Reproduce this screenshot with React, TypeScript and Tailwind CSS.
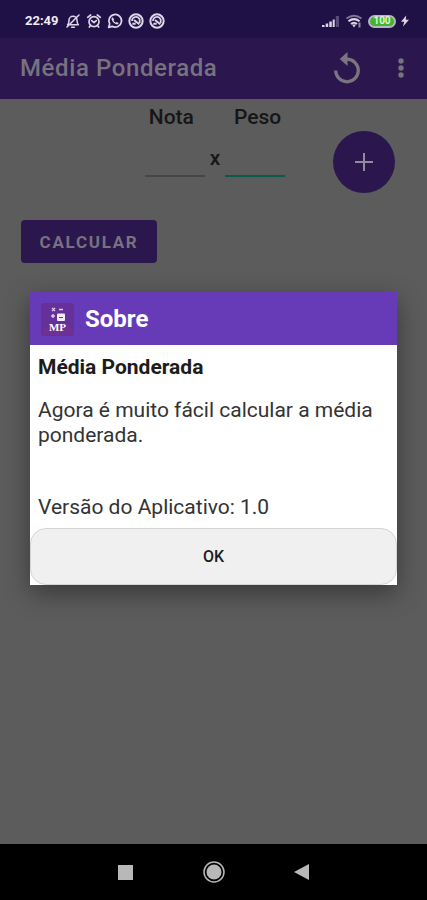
import { useState } from "react";
import clsx from "clsx";

function MutedBellIcon() {
  return (
    <svg viewBox="0 0 24 24" className="size-4" fill="none" stroke="currentColor" strokeWidth="2.3" strokeLinecap="round" strokeLinejoin="round" aria-hidden="true">
      <path d="M4 17.5h16c-2-1.500-2-3-2-6.500a6 6 0 0 0-12 0c0 3.500 0 5-2 6.500ZM10 21.500h4M21 3 3 21" />
    </svg>
  );
}

function AlarmIcon() {
  return (
    <svg viewBox="0 0 24 24" className="size-4" fill="none" stroke="currentColor" strokeWidth="2.5" strokeLinecap="round" strokeLinejoin="round" aria-hidden="true">
      <circle cx="12" cy="13" r="7.500" />
      <path d="M2.500 6.500 7 3M21.500 6.500 17 3M8.500 11.500l3.500 3 3.500-3M6.500 19 5 21M17.500 19l1.500 2" />
    </svg>
  );
}

function WhatsAppIcon() {
  return (
    <svg viewBox="0 0 24 24" className="size-4" fill="none" stroke="currentColor" strokeWidth="2.6" strokeLinejoin="round" aria-hidden="true">
      <path d="M2.500 21.500 4 16.300A9.500 9.500 0 1 1 7.700 20Z" />
      <path fill="currentColor" stroke="none" d="M8.400 6.500c-1.400.7-1.800 2.200-1.300 3.800 1 3.200 3.600 5.800 6.800 6.700 1.600.4 3.200-.3 3.600-1.900l-2.900-1.700-1.400 1.300c-1.500-.7-2.700-1.900-3.400-3.400l1-1.400Z" />
    </svg>
  );
}

function AppNoticeIcon() {
  return (
    <svg viewBox="0 0 24 24" className="size-4" fill="none" stroke="currentColor" aria-hidden="true">
      <circle cx="12" cy="12" r="10" strokeWidth="3" />
      <path d="M6 12a6 6 0 0 1 11.500-2.500V15" strokeWidth="2.6" />
      <path d="M9 10.500 17 17M6.500 16h5" strokeWidth="3" />
    </svg>
  );
}

function SignalIcon() {
  return (
    <svg viewBox="0 0 18 14" className="h-3.5 w-[18px]" fill="currentColor" aria-hidden="true">
      <path d="M0 11h2.500v2H0zM3.700 9.500h2.500V13H3.700zM7.300 7.500h2.500V13H7.300zM10.700 5.500h2V13h-2z" />
      <path opacity=".3" d="M13.800 2h3.200v11h-3.200z" />
    </svg>
  );
}

function WifiIcon() {
  return (
    <svg viewBox="0 0 18 14" className="h-3.5 w-[18px]" fill="none" stroke="currentColor" strokeWidth="2" aria-hidden="true">
      <path opacity=".5" d="M1.500 4.500q7.500-5.500 15 0" />
      <path d="M3.500 7.300q5.500-4.300 11 0M6 10q3-2.500 6 0" />
      <path d="m7 10.500 2 3 2-3Z" fill="currentColor" stroke="none" />
      <path opacity=".6" d="M14.500 8.500v5" />
    </svg>
  );
}

function StatusBar() {
  return (
    <div className="flex h-[38px] items-center justify-between bg-[#1f1145] pt-1 pr-[18px] pl-[25px] text-[#dcd8e8]">
      <div className="flex items-center gap-[5px]">
        <span className="mr-px text-[13px] font-bold text-[#eeebf5]">22:49</span>
        <MutedBellIcon />
        <AlarmIcon />
        <WhatsAppIcon />
        <AppNoticeIcon />
        <AppNoticeIcon />
      </div>
      <div className="flex items-center gap-[5px]">
        <SignalIcon />
        <WifiIcon />
        <span className="flex h-[13px] w-7 items-center justify-center rounded-full border-2 border-[#b9b3c8] bg-[#43b52b] text-[10px] leading-none font-bold text-[#dcf7d5]">
          100
        </span>
        <svg viewBox="0 0 10 14" className="h-3 w-2" fill="currentColor" aria-hidden="true">
          <path d="M6.500 0 0 8h4L2.500 14 10 5.500H6Z" />
        </svg>
      </div>
    </div>
  );
}

function AppBar() {
  return (
    <header className="flex h-[61px] items-center bg-[#2b174d] pr-4 pb-0.5 pl-5 text-[#777280]">
      <h1 className="flex-1 text-2xl font-medium tracking-wide">Média Ponderada</h1>
      <button type="button" aria-label="Reiniciar" className="flex size-10 items-center justify-center">
        <svg viewBox="0 0 26 32" className="h-8 w-[26px] text-[#7b7581]" aria-hidden="true">
          <path d="M1.700 18.500A11.300 11.300 0 1 0 13 7.200" fill="none" stroke="currentColor" strokeWidth="3.2" />
          <path d="M13.500 0v14L5.700 7Z" fill="currentColor" />
        </svg>
      </button>
      <button type="button" aria-label="Mais opções" className="ml-6 flex h-10 w-5 items-center justify-center">
        <svg viewBox="0 0 6 20" className="h-5 w-1.5" fill="currentColor" aria-hidden="true">
          <circle cx="3" cy="3" r="2.700" />
          <circle cx="3" cy="10" r="2.700" />
          <circle cx="3" cy="17" r="2.700" />
        </svg>
      </button>
    </header>
  );
}

function GradeInput({ id, active = false }: { id: string; active?: boolean }) {
  return (
    <input
      id={id}
      inputMode="decimal"
      className={clsx("h-[46px] w-[60px] border-b-2 bg-transparent text-center outline-none", active ? "border-[#0b5a4f]" : "border-[#464646]")}
    />
  );
}

function GradeForm() {
  return (
    <main className="flex-1 px-5 pt-1 text-[21px] leading-7 text-[#161616]">
      <div className="flex items-start justify-end">
        <div className="flex flex-col items-center font-medium">
          <div className="flex gap-10">
            <label htmlFor="nota">Nota</label>
            <label htmlFor="peso">Peso</label>
          </div>
          <div className="flex items-center">
            <GradeInput id="nota" />
            <span className="w-5 pt-2 text-center">x</span>
            <GradeInput id="peso" active />
          </div>
        </div>
        <button type="button" aria-label="Adicionar nota" className="mt-7 mr-3 ml-12 flex size-[62px] items-center justify-center rounded-full bg-[#2b174d] text-[#928b9c]">
          <svg viewBox="0 0 18 18" className="size-[18px]" stroke="currentColor" strokeWidth="2" aria-hidden="true">
            <path d="M9 0v18M0 9h18" />
          </svg>
        </button>
      </div>
      <button type="button" className="mt-[27px] ml-px flex h-[43px] w-[136px] items-center justify-center rounded bg-[#2b174d] text-[17px] font-bold tracking-widest text-[#777280]">
        CALCULAR
      </button>
    </main>
  );
}

function AppLogo() {
  return (
    <svg viewBox="0 0 33 33" className="size-[33px]" aria-hidden="true">
      <rect width="33" height="33" rx="3" fill="#65309a" />
      <rect x="1" y="25" width="31" height="7" rx="2" fill="#75308f" opacity=".6" />
      <g fill="none" stroke="#d9c6ea" strokeWidth="1.500">
        <path d="m11 5 3 3m0-3-3 3M18 6.500h4M10 13h4M12 11v4" />
      </g>
      <rect x="16" y="10.500" width="8" height="7.500" rx="1" fill="#f3edf8" />
      <path d="M18 14.500h4" stroke="#65309a" />
      <text x="16.500" y="28" textAnchor="middle" fontFamily="Liberation Serif, serif" fontWeight="700" fontSize="11" fill="#fff">MP</text>
    </svg>
  );
}

function AboutDialog({ onClose }: { onClose: () => void }) {
  return (
    <section role="dialog" aria-modal="true" aria-labelledby="about-title" className="w-full bg-white text-[#1c1c1c] shadow-[0_8px_24px_rgba(0,0,0,0.4)]">
      <header className="flex h-[53px] items-center gap-[11px] bg-[#673ab7] px-[11px] pt-0.5">
        <AppLogo />
        <h2 id="about-title" className="text-2xl font-bold text-white">Sobre</h2>
      </header>
      <div className="px-2 pt-2.5 text-[21px] leading-[25px]">
        <h3 className="font-bold">Média Ponderada</h3>
        <p className="mt-[18px] text-[#333]">Agora é muito fácil calcular a média ponderada.</p>
        <p className="mt-[47px] pb-2 text-[#333]">Versão do Aplicativo: 1.0</p>
      </div>
      <button type="button" onClick={onClose} className="block h-[57px] w-full rounded-2xl border border-[#d4d4d4] bg-[#f0f0f0] pt-0.5 text-base font-medium">
        OK
      </button>
    </section>
  );
}

function NavigationBar() {
  return (
    <nav aria-label="Navegação do sistema" className="flex h-14 items-center justify-center gap-12 bg-black text-[#b8b8b8]">
      <button type="button" aria-label="Recentes" className="flex size-10 items-center justify-center">
        <span className="size-[15px] bg-current" />
      </button>
      <button type="button" aria-label="Início" className="flex size-10 items-center justify-center">
        <svg viewBox="0 0 22 22" className="size-[22px]" aria-hidden="true">
          <circle cx="11" cy="11" r="10" fill="none" stroke="currentColor" strokeWidth="1.500" />
          <circle cx="11" cy="11" r="7.500" fill="currentColor" />
        </svg>
      </button>
      <button type="button" aria-label="Voltar" className="flex size-10 items-center justify-center">
        <svg viewBox="0 0 15 16" className="h-4 w-[15px]" fill="currentColor" aria-hidden="true">
          <path d="M15 0v16L0 8Z" />
        </svg>
      </button>
    </nav>
  );
}

export default function App() {
  const [aboutOpen, setAboutOpen] = useState(true);
  return (
    <div className="flex min-h-screen flex-col bg-[#5c5c5c] font-[Roboto,sans-serif]">
      <div className="relative flex flex-1 flex-col">
        <StatusBar />
        <AppBar />
        <GradeForm />
        {aboutOpen && (
          <div className="absolute inset-0 flex items-center px-[30px] pt-8">
            <AboutDialog onClose={() => setAboutOpen(false)} />
          </div>
        )}
      </div>
      <NavigationBar />
    </div>
  );
}
